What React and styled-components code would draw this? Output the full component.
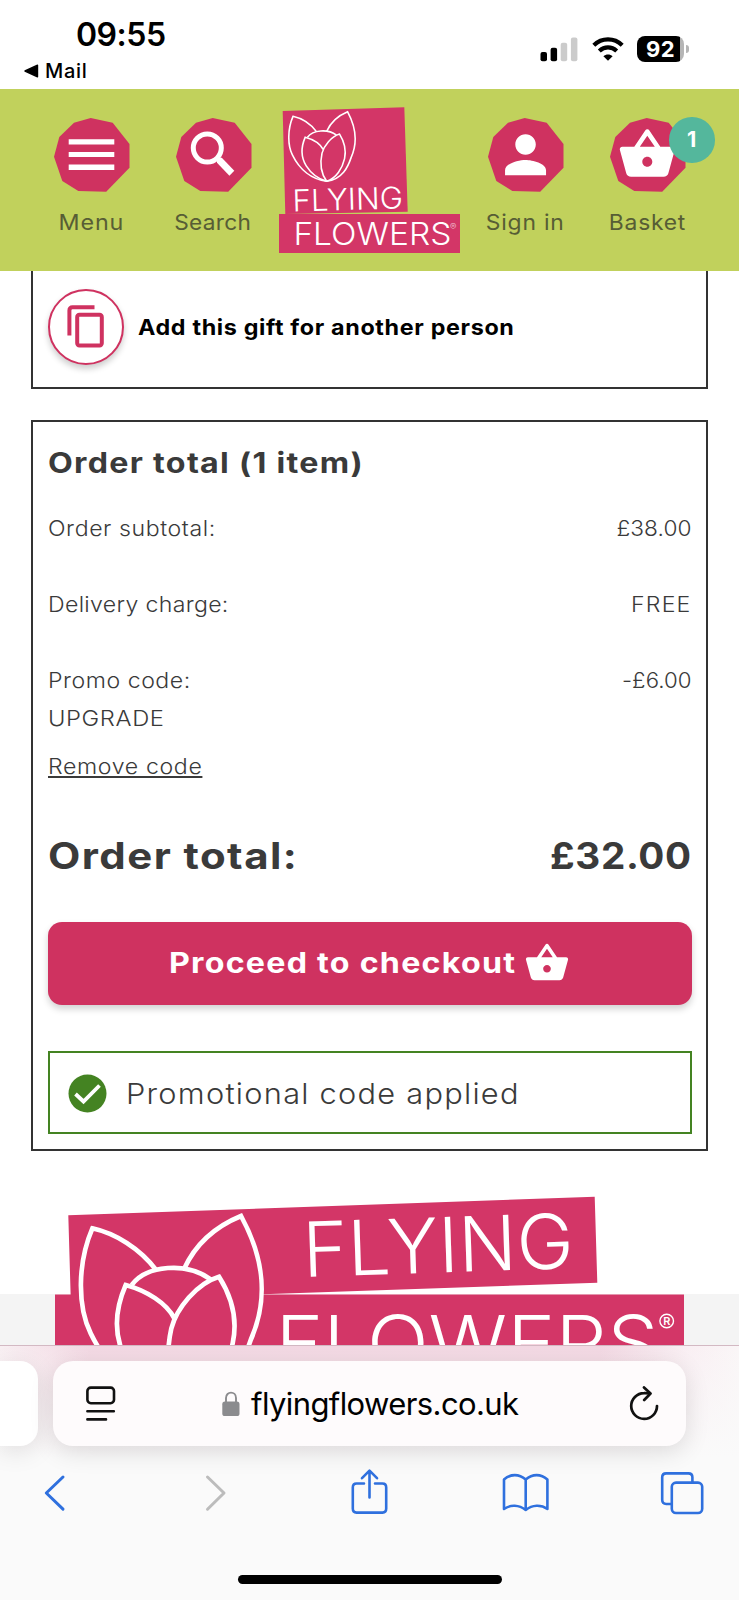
import styled, { createGlobalStyle, css } from 'styled-components';
import { MdPerson, MdShoppingBasket } from 'react-icons/md';

const colors = {
  lime: '#c1d15c',
  pink: '#cf3260',
  logo: '#d33667',
  teal: '#54b79c',
  green: '#448322',
  text: '#3a3a3a',
  line: '#333333',
  blue: '#2f70de',
};

const charges = [
  { label: 'Order subtotal:', labelTrack: 0.55, value: '£38.00', valueTrack: 0.1, valueStretch: 1.05 },
  { label: 'Delivery charge:', labelTrack: 0.3, value: 'FREE', valueTrack: 1.1, valueStretch: 1.07 },
];

const Tulip = (props) => (
  <svg {...props} viewBox="230 120 570 600" fill="none" stroke="#fff">
    <path d="M470 302C420 235 345 190 277 175C232 280 232 410 272 490C330 610 430 690 552 705C680 690 725 590 752 510C805 390 795 270 723 138C645 170 585 225 552 297" />
    <path d="M395 345C440 285 560 275 632 328" />
    <path d="M523 445C500 400 440 362 377 345C340 430 342 510 385 580C430 650 490 690 552 705C630 680 680 600 698 520C713 450 695 380 657 320C590 340 530 415 514 475C495 560 505 640 552 705" />
  </svg>
);

const HeaderLogo = () => (
  <Brand viewBox="279 104 181 152" width="181" height="152">
    <path d="M282.7 111L404.3 107.3L407.7 211.7L285.3 214Z" fill={colors.logo} />
    <path d="M279 214H460V253H279Z" fill={colors.logo} />
    <Tulip x="287.2" y="109.6" width="69.9" height="73.5" strokeWidth="13" />
    <BrandText transform="translate(292.8 211.4) rotate(-1.6)" fontSize="30.2" textLength="110.5">
      FLYING
    </BrandText>
    <BrandText x="293.4" y="244.8" fontSize="30.6" textLength="158">
      FLOWERS
    </BrandText>
    <BrandText x="450" y="229.5" fontSize="9.5" opacity="0.7">
      ®
    </BrandText>
  </Brand>
);

const FooterLogo = () => (
  <Brand viewBox="50 1190 640 156" width="640" height="156">
    <path d="M68.3 1215.3L594.7 1196.7L597.3 1282.7L263 1294.3V1297H70.7Z" fill={colors.logo} />
    <path d="M55 1294.5H684V1360H55Z" fill={colors.logo} />
    <Tulip x="76.7" y="1210" width="190" height="200" strokeWidth="14" />
    <BrandText transform="translate(303.5 1277) rotate(-1.9)" fontSize="76" textLength="271">
      FLYING
    </BrandText>
    <BrandText x="275.5" y="1370" fontSize="76" textLength="383">
      FLOWERS
    </BrandText>
    <circle cx="666.7" cy="1321" r="6.8" fill="none" stroke="#fff" strokeWidth="1.4" />
    <BrandText x="663.2" y="1324.9" fontSize="11" fontWeight="600">
      R
    </BrandText>
  </Brand>
);

const Nonagon = ({ children }) => (
  <svg width="76" height="74" viewBox="0 0 76 74" fill="#fff" color="#fff">
    <path
      d="M36.7 0L58.7 4.7L75.5 26V49.7L52.2 73.7L24.3 73L8.3 63L0 38.7L5.3 19L20 4.7Z"
      fill={colors.pink}
    />
    {children}
  </svg>
);

const StatusBar = () => (
  <Status>
    <div>
      <Time>09:55</Time>
      <BackApp>
        <svg width="15" height="14" viewBox="0 0 15 14">
          <path d="M1 7L13.5 1.2V12.8Z" stroke="#000" strokeWidth="1.4" strokeLinejoin="round" />
        </svg>
        Mail
      </BackApp>
    </div>
    <Indicators>
      <svg width="38" height="25" viewBox="0 0 38 25">
        <rect x="0.5" y="15" width="6.5" height="9.3" rx="2" />
        <rect x="10.6" y="10.7" width="6.5" height="13.6" rx="2" />
        <rect x="20.7" y="5.8" width="6.5" height="18.5" rx="2" fill="#cbcbcb" />
        <rect x="30.9" y="0.6" width="6.5" height="23.7" rx="2" fill="#cbcbcb" />
      </svg>
      <svg width="32" height="24" viewBox="0 0 32 24" fill="none" stroke="#000" strokeWidth="4.2">
        <path d="M1.8 8.2C9.8 0.4 22.2 0.4 30.2 8.2" />
        <path d="M7.3 14C12.4 9.2 19.6 9.2 24.7 14" />
        <path d="M11.4 19.2C14 16.8 18 16.8 20.6 19.2L16 23.8Z" fill="#000" stroke="none" />
      </svg>
      <Battery>92</Battery>
    </Indicators>
  </Status>
);

const SiteHeader = () => (
  <Header>
    <NavItem>
      <Nonagon>
        <path d="M14.7 21.2H60.3V26.5H14.7ZM14.7 33.9H60.3V39.1H14.7ZM14.7 46.6H60.3V51.9H14.7Z" />
      </Nonagon>
      <NavLabel $stretch={1.08} $track={0.8}>Menu</NavLabel>
    </NavItem>
    <NavItem>
      <Nonagon>
        <circle cx="31.3" cy="30" r="14" fill="none" stroke="#fff" strokeWidth="5" />
        <path d="M41 39.8H45.8L58.3 52.8L53.4 57.8L41 44.8Z" />
      </Nonagon>
      <NavLabel $stretch={1.05} $track={0.3}>Search</NavLabel>
    </NavItem>
    <HeaderLogo />
    <NavItem>
      <Nonagon>
        <MdPerson x="6.8" y="6.1" size={61.5} />
      </Nonagon>
      <NavLabel $stretch={1.06} $track={0.75}>Sign in</NavLabel>
    </NavItem>
    <NavItem>
      <Nonagon>
        <MdShoppingBasket x="7.3" y="6.3" size={60} />
      </Nonagon>
      <NavLabel $stretch={1.06} $track={0.7}>Basket</NavLabel>
      <Badge>1</Badge>
    </NavItem>
  </Header>
);

const OrderSummary = () => (
  <Summary>
    <Title $stretch={1.15} $track={1.12}>Order total (1 item)</Title>
    {charges.map((charge) => (
      <Charge key={charge.label}>
        <Text $stretch={1.07} $track={charge.labelTrack}>{charge.label}</Text>
        <Text $end $stretch={charge.valueStretch} $track={charge.valueTrack}>{charge.value}</Text>
      </Charge>
    ))}
    <PromoCharge>
      <div>
        <Text $stretch={1.07} $track={0.5}>Promo code:</Text>
        <Text $stretch={1.1} $track={0.55}>UPGRADE</Text>
      </div>
      <Text $end $stretch={1.03} $track={0.05}>-£6.00</Text>
    </PromoCharge>
    <RemoveLink href="#" $stretch={1.07} $track={0.6}>Remove code</RemoveLink>
    <Total>
      <Amount $stretch={1.15} $track={1.25}>Order total:</Amount>
      <Amount $end $stretch={1.06} $track={0.6}>£32.00</Amount>
    </Total>
    <Checkout type="button">
      <CheckoutLabel $stretch={1.15} $track={1.08}>Proceed to checkout</CheckoutLabel>
      <MdShoppingBasket size={46} />
    </Checkout>
    <Notice>
      <svg width="39" height="39" viewBox="0 0 39 39">
        <circle cx="19.5" cy="19.5" r="19" fill={colors.green} />
        <path d="M7.5 20L15.5 27.5L31.5 11.5" fill="none" stroke="#fff" strokeWidth="3.8" />
      </svg>
      <NoticeText $stretch={1.08} $track={1.15}>Promotional code applied</NoticeText>
    </Notice>
  </Summary>
);

const BrowserBar = () => (
  <Browser>
    <TabStrip>
      <NextTab />
      <AddressBar>
        <svg width="30" height="36" viewBox="0 0 30 36" fill="none" stroke="#111" strokeWidth="2.6" strokeLinecap="round">
          <rect x="1.4" y="1.6" width="26.6" height="15.6" rx="3.4" />
          <path d="M1.4 25.2H27.8M1.4 33.4H20" />
        </svg>
        <Url>
          <svg width="18" height="26" viewBox="0 0 18 26" fill="#8b8b8e">
            <path d="M4 12V7C4 -0.2 14 -0.2 14 7V12" fill="none" stroke="#8b8b8e" strokeWidth="1.9" />
            <rect x="0.3" y="10.6" width="17.2" height="14.4" rx="2.6" />
          </svg>
          flyingflowers.co.uk
        </Url>
        <svg width="30" height="36" viewBox="0 0 30 36" fill="none" stroke="#111" strokeWidth="2.7" strokeLinecap="round" strokeLinejoin="round">
          <path d="M28 20A12.9 12.9 0 1 1 15 7.1Q18 7 20.8 7.5" />
          <path d="M15 1.4L21.5 7.5L15.2 14" />
        </svg>
      </AddressBar>
    </TabStrip>
    <Toolbar>
      <svg viewBox="0 0 48 48">
        <path d="M32 9L15.3 25L32 41.2" />
      </svg>
      <svg viewBox="0 0 48 48" stroke="#bcbcbc">
        <path d="M19.5 9L36 25L19.5 41.2" />
      </svg>
      <svg viewBox="1 0 48 48" strokeWidth="2.6">
        <path d="M20 15.5H12.5Q8.8 15.5 8.8 19.5V40.6Q8.8 44.6 12.5 44.6H38.5Q42.2 44.6 42.2 40.6V19.5Q42.2 15.5 38.5 15.5H31" />
        <path d="M25.5 29.5V3M18 10.2L25.5 2.6L33 10.2" />
      </svg>
      <svg viewBox="0 0 48 48" strokeWidth="2.6">
        <path d="M24.7 42C18 36.7 9.5 36.4 3 41V11.5C9.5 5.6 18 5.6 24.7 11.5C31.4 5.6 39.9 5.6 46.4 11.5V41C39.9 36.4 31.4 36.7 24.7 42ZM24.7 11.5V42" />
      </svg>
      <svg viewBox="0 0 48 48" strokeWidth="2.6">
        <rect x="13.8" y="14.6" width="30.4" height="30.4" rx="4.2" />
        <path d="M13.8 36H8.2Q4.2 36 4.2 31.8V9.3Q4.2 5.4 8.2 5.4H30.4Q34.4 5.4 34.4 9.3V14.6" />
      </svg>
    </Toolbar>
    <HomeIndicator />
  </Browser>
);

export default function App() {
  return (
    <Screen>
      <GlobalStyle />
      <StatusBar />
      <SiteHeader />
      <Basket>
        <GiftCard>
          <CopyButton type="button" aria-label="Add gift">
            <svg width="38" height="43" viewBox="0 0 38 43" fill="none" stroke="currentColor" strokeWidth="4">
              <path d="M2.4 30.5V5.4Q2.4 2.3 5.5 2.3H27.5" />
              <rect x="10.2" y="9.7" width="24.6" height="30.8" rx="2.2" />
            </svg>
          </CopyButton>
          <GiftText $stretch={1.08} $track={0.6}>Add this gift for another person</GiftText>
        </GiftCard>
        <OrderSummary />
        <Footer>
          <FooterLogo />
        </Footer>
      </Basket>
      <BrowserBar />
    </Screen>
  );
}

const GlobalStyle = createGlobalStyle`
  * {
    box-sizing: border-box;
  }
  body {
    margin: 0;
    background: #fff;
    font-family: Inter, 'Liberation Sans', sans-serif;
    color: ${colors.text};
  }
  svg {
    display: block;
    flex: none;
  }
  button {
    border: 0;
    padding: 0;
    font-family: inherit;
  }
`;

// the shop's own texts are set wide, the browser's are not
const wide = css`
  letter-spacing: ${(props) => props.$track}px;
  white-space: nowrap;
  transform: scaleX(${(props) => props.$stretch});
  transform-origin: ${(props) => (props.$end ? 'right' : 'left')};
`;

const Screen = styled.div`
  display: flex;
  flex-direction: column;
  width: 739px;
  height: 1600px;
  overflow: hidden;
`;

const Status = styled.div`
  display: flex;
  justify-content: space-between;
  flex: none;
  height: 89px;
  padding: 16px 55px 0 24px;
  color: #000;
`;

const Time = styled.div`
  margin-left: 52px;
  font-size: 32px;
  font-weight: 600;
  line-height: 38px;
  letter-spacing: -0.5px;
`;

const BackApp = styled.div`
  display: flex;
  align-items: center;
  gap: 6px;
  margin-top: 5px;
  font-size: 20px;
  font-weight: 500;
  line-height: 24px;
  letter-spacing: 0.7px;
`;

const Indicators = styled.div`
  display: flex;
  align-items: center;
  gap: 13.5px;
  height: 26px;
  margin-top: 20px;
`;

const Battery = styled.div`
  position: relative;
  width: 47px;
  height: 26px;
  border-radius: 8px;
  background: linear-gradient(90deg, #000 43.5px, #b5b5b5 43.5px);
  color: #fff;
  font-size: 22px;
  font-weight: 700;
  line-height: 26px;
  letter-spacing: 0.5px;
  text-align: center;
  &::after {
    content: '';
    position: absolute;
    left: 49px;
    top: 9px;
    width: 2.5px;
    height: 8px;
    border-radius: 0 3px 3px 0;
    background: #b5b5b5;
  }
`;

const Header = styled.header`
  display: flex;
  gap: 46px;
  flex: none;
  height: 182px;
  padding: 29px 0 0 54px;
  background: ${colors.lime};
`;

const NavItem = styled.div`
  position: relative;
  display: flex;
  flex-direction: column;
  align-items: center;
  flex: none;
  width: 76px;
`;

const NavLabel = styled.span`
  ${wide}
  margin: 17px 2px 0 0;
  color: #575d35;
  font-size: 21.6px;
  line-height: 26px;
  transform-origin: center;
`;

const Badge = styled.span`
  position: absolute;
  top: -1px;
  left: 59px;
  width: 45.5px;
  height: 45.5px;
  border-radius: 50%;
  background: ${colors.teal};
  color: #fff;
  font-size: 21.6px;
  font-weight: 700;
  line-height: 45px;
  text-align: center;
`;

const Brand = styled.svg`
  ${Header} & {
    margin: -14px -18px 0 -19px;
  }
`;

const BrandText = styled.text.attrs({ lengthAdjust: 'spacingAndGlyphs' })`
  fill: #fff;
  font-family: Inter, 'Liberation Sans', sans-serif;
  font-weight: ${(props) => props.fontWeight || 300};
`;

const Basket = styled.main`
  flex: none;
  height: 1074px;
  overflow: hidden;
`;

const GiftCard = styled.section`
  display: flex;
  align-items: center;
  gap: 14.5px;
  width: 677px;
  height: 118px;
  margin: 0 0 31px 31px;
  padding: 0 14.5px 4.5px;
  border: 2px solid ${colors.line};
  border-top: 0;
`;

const GiftText = styled.span`
  ${wide}
  color: #000;
  font-size: 21.6px;
  font-weight: 700;
`;

const CopyButton = styled.button`
  display: flex;
  align-items: center;
  justify-content: center;
  width: 76px;
  height: 76px;
  border: 2px solid ${colors.pink};
  border-radius: 50%;
  background: #fff;
  box-shadow: 0 4px 6px rgba(0, 0, 0, 0.2);
  color: ${colors.pink};
`;

const Summary = styled.section`
  width: 677px;
  height: 731px;
  margin-left: 31px;
  padding: 21.5px 14.5px 0;
  border: 2px solid ${colors.line};
`;

const Title = styled.h2`
  ${wide}
  margin: 0 0 27px;
  font-size: 28px;
  font-weight: 700;
  line-height: 38px;
`;

const Charge = styled.div`
  display: flex;
  justify-content: space-between;
  height: 76px;
`;

const PromoCharge = styled(Charge)`
  margin-bottom: 10.5px;
`;

const Text = styled.div`
  ${wide}
  font-size: 21.6px;
  font-weight: 350;
  line-height: 38px;
`;

const RemoveLink = styled.a`
  ${wide}
  display: block;
  width: fit-content;
  color: inherit;
  font-size: 21.6px;
  font-weight: 350;
  line-height: 38px;
  text-decoration-thickness: 2px;
  text-underline-offset: 2px;
  text-decoration-skip-ink: none;
`;

const Total = styled.div`
  display: flex;
  justify-content: space-between;
  margin: 48px 0 42.5px;
`;

const Amount = styled.strong`
  ${wide}
  font-size: 36.5px;
  line-height: 46px;
`;

const Checkout = styled.button`
  display: flex;
  align-items: center;
  justify-content: center;
  width: 100%;
  height: 83.5px;
  border-radius: 14px;
  background: ${colors.pink};
  box-shadow: 0 4px 7px rgba(0, 0, 0, 0.18);
  color: #fff;
`;

const CheckoutLabel = styled.span`
  ${wide}
  margin-right: 54px;
  font-size: 28px;
  font-weight: 700;
`;

const Notice = styled.div`
  display: flex;
  align-items: center;
  gap: 19px;
  height: 83.5px;
  margin-top: 45.5px;
  padding: 3px 18px 0;
  border: 2px solid ${colors.green};
`;

const NoticeText = styled.span`
  ${wide}
  font-size: 28.5px;
  font-weight: 300;
`;

const Footer = styled.footer`
  height: 194px;
  padding: 39px 0 0 50px;
  background: linear-gradient(#fff 143px, #f4f4f4 143px);
`;

const Browser = styled.nav`
  display: flex;
  flex-direction: column;
  flex: none;
  height: 255px;
  border-top: 1px solid #d3b9c3;
  background: linear-gradient(
      180deg,
      rgba(250, 250, 250, 0),
      rgba(250, 250, 250, 0.6) 70px,
      #fafafa 112px
    ),
    linear-gradient(90deg, #f8eff2, #f3d8e3 90px, #f3d8e3 600px, #f9eff3 690px, #faf6f7);
`;

const TabStrip = styled.div`
  display: flex;
  gap: 15px;
  padding-top: 15px;
`;

const NextTab = styled.div`
  width: 38px;
  height: 85px;
  border-radius: 0 18px 18px 0;
  background: #fff;
  box-shadow: 0 6px 24px rgba(0, 0, 0, 0.1);
`;

const AddressBar = styled.div`
  display: flex;
  align-items: center;
  justify-content: space-between;
  width: 632.5px;
  height: 85px;
  padding: 0 26px 0 33px;
  border-radius: 20px;
  background: #fefbfc;
  box-shadow: 0 6px 24px rgba(0, 0, 0, 0.12);
`;

const Url = styled.div`
  display: flex;
  align-items: center;
  gap: 11px;
  margin-right: 5px;
  color: #000;
  font-size: 31px;
  letter-spacing: -0.6px;
`;

const Toolbar = styled.div`
  display: flex;
  justify-content: space-between;
  padding: 22px 33px 0 31px;
  svg {
    width: 48px;
    height: 48px;
    fill: none;
    stroke-linecap: round;
    stroke-linejoin: round;
  }
  svg:not([stroke]) {
    stroke: ${colors.blue};
  }
  svg:not([stroke-width]) {
    stroke-width: 3;
  }
`;

const HomeIndicator = styled.div`
  width: 264px;
  height: 9.5px;
  margin: 58.5px auto 0;
  border-radius: 5px;
  background: #000;
`;
